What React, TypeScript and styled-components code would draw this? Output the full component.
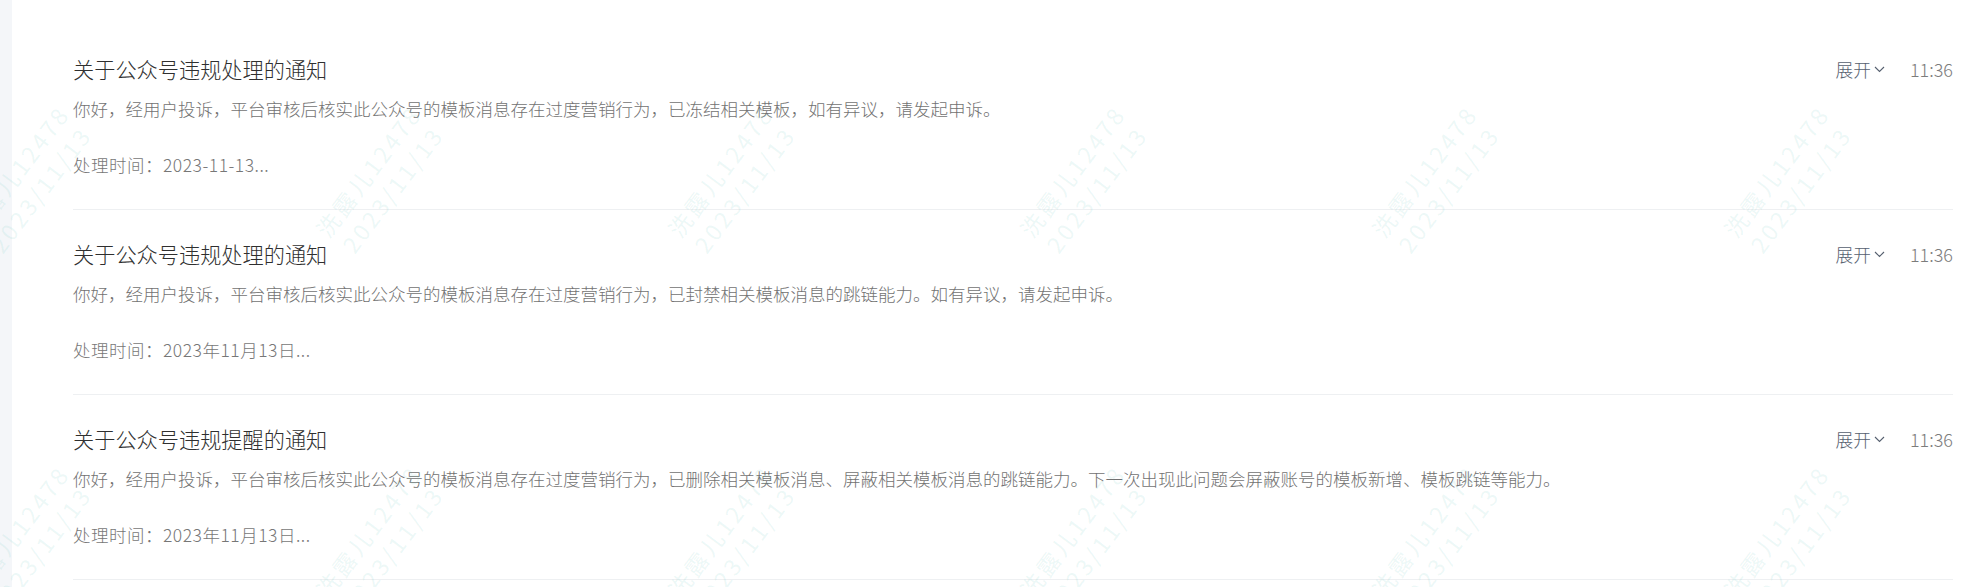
import React from 'react'
import styled, { createGlobalStyle } from 'styled-components'

const GlobalStyle = createGlobalStyle`
  html, body {
    margin: 0;
    padding: 0;
    background: #ffffff;
  }
  body {
    font-family: "Noto Sans CJK SC", "Noto Sans", sans-serif;
  }
`

const Page = styled.div`
  position: relative;
  display: flex;
  width: 1972px;
  height: 587px;
  overflow: hidden;
  background: #ffffff;
`

const SideStrip = styled.div`
  flex: 0 0 12px;
  background: #f4f6f9;
`

const Content = styled.div`
  flex: 1;
  padding: 25px 19px 0 61px;
`

const List = styled.ul`
  list-style: none;
  margin: 0;
  padding: 0;
`

const Item = styled.li`
  display: flex;
  flex-direction: column;
  padding: 29px 0 31px;
  border-bottom: 1px solid #eef0f2;
`

const Header = styled.div`
  display: flex;
  align-items: center;
  height: 30px;
`

const Title = styled.h3`
  flex: 1;
  margin: 0;
  font-size: 21.2px;
  font-weight: 300;
  line-height: 30px;
  color: #2f2f2f;
`

const Actions = styled.div`
  display: flex;
  align-items: center;
  gap: 25px;
`

const Toggle = styled.button`
  display: flex;
  align-items: center;
  gap: 3px;
  padding: 0;
  border: none;
  background: none;
  font-family: inherit;
  font-size: 17.7px;
  font-weight: 300;
  line-height: 26px;
  color: #56606f;
  cursor: pointer;
`

const Time = styled.span`
  font-size: 18px;
  font-weight: 300;
  line-height: 26px;
  color: #7c7c7c;
`

const Desc = styled.p`
  margin: 12px 0 0;
  font-size: 17.5px;
  font-weight: 300;
  line-height: 26px;
  color: #727272;
`

const Handled = styled.p`
  margin: 30px 0 0;
  font-size: 17.5px;
  font-weight: 300;
  line-height: 26px;
  letter-spacing: 0.5px;
  color: #777777;
`

const Watermarks = styled.div`
  position: absolute;
  inset: 0;
  display: grid;
  grid-template-columns: repeat(7, 352px);
  grid-auto-rows: 360px;
  margin: 0 0 0 -148px;
  pointer-events: none;
`

const Mark = styled.div`
  display: flex;
  flex-direction: column;
  align-items: center;
  justify-content: center;
  transform: rotate(-53deg);
  font-size: 23px;
  letter-spacing: 3px;
  line-height: 30px;
  color: rgba(70, 190, 170, 0.1);
  white-space: nowrap;
`

const Chevron = () => (
  <svg width="11" height="7" viewBox="0 0 11 7" fill="none">
    <path d="M1 1l4.5 4.5L10 1" stroke="currentColor" strokeWidth="1.1" />
  </svg>
)

const notices = [
  {
    title: '关于公众号违规处理的通知',
    desc: '你好，经用户投诉，平台审核后核实此公众号的模板消息存在过度营销行为，已冻结相关模板，如有异议，请发起申诉。',
    handled: '处理时间：2023-11-13...',
  },
  {
    title: '关于公众号违规处理的通知',
    desc: '你好，经用户投诉，平台审核后核实此公众号的模板消息存在过度营销行为，已封禁相关模板消息的跳链能力。如有异议，请发起申诉。',
    handled: '处理时间：2023年11月13日...',
  },
  {
    title: '关于公众号违规提醒的通知',
    desc: '你好，经用户投诉，平台审核后核实此公众号的模板消息存在过度营销行为，已删除相关模板消息、屏蔽相关模板消息的跳链能力。下一次出现此问题会屏蔽账号的模板新增、模板跳链等能力。',
    handled: '处理时间：2023年11月13日...',
  },
]

export default function App() {
  return (
    <>
      <GlobalStyle />
      <Page>
        <SideStrip />
        <Content>
          <List>
            {notices.map((n, i) => (
              <Item key={i}>
                <Header>
                  <Title>{n.title}</Title>
                  <Actions>
                    <Toggle>
                      展开
                      <Chevron />
                    </Toggle>
                    <Time>11:36</Time>
                  </Actions>
                </Header>
                <Desc>{n.desc}</Desc>
                <Handled>{n.handled}</Handled>
              </Item>
            ))}
          </List>
        </Content>
        <Watermarks>
          {Array.from({ length: 14 }).map((_, i) => (
            <Mark key={i}>
              <span>洗露儿12478</span>
              <span>2023/11/13</span>
            </Mark>
          ))}
        </Watermarks>
      </Page>
    </>
  )
}
